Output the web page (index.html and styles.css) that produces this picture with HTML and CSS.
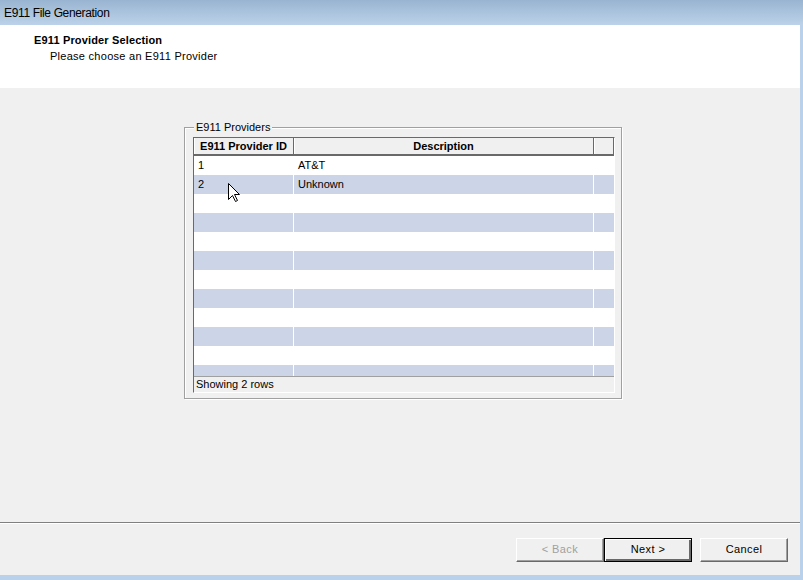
FILE: index.html
```html
<!DOCTYPE html>
<html>
<head>
<meta charset="utf-8">
<title>E911 File Generation</title>
<link rel="stylesheet" href="styles.css">
</head>
<body>
<div class="window">
  <div class="titlebar">E911 File Generation</div>
  <div class="main">
    <div class="hdr">
      <div class="hdr-title">E911 Provider Selection</div>
      <div class="hdr-sub">Please choose an E911 Provider</div>
    </div>
    <div class="content">
      <div class="groupbox">
        <div class="legend">E911 Providers</div>
        <div class="grid">
          <div class="grid-head">
            <div class="hc c1">E911 Provider ID</div>
            <div class="hc c2">Description</div>
            <div class="hc c3"></div>
          </div>
          <div class="rows">
            <div class="row"><div class="cell c1">1</div><div class="cell c2">AT&amp;T</div><div class="cell c3"></div></div>
            <div class="row alt"><div class="cell c1">2</div><div class="cell c2">Unknown</div><div class="cell c3"></div></div>
            <div class="row"><div class="cell c1"></div><div class="cell c2"></div><div class="cell c3"></div></div>
            <div class="row alt"><div class="cell c1"></div><div class="cell c2"></div><div class="cell c3"></div></div>
            <div class="row"><div class="cell c1"></div><div class="cell c2"></div><div class="cell c3"></div></div>
            <div class="row alt"><div class="cell c1"></div><div class="cell c2"></div><div class="cell c3"></div></div>
            <div class="row"><div class="cell c1"></div><div class="cell c2"></div><div class="cell c3"></div></div>
            <div class="row alt"><div class="cell c1"></div><div class="cell c2"></div><div class="cell c3"></div></div>
            <div class="row"><div class="cell c1"></div><div class="cell c2"></div><div class="cell c3"></div></div>
            <div class="row alt"><div class="cell c1"></div><div class="cell c2"></div><div class="cell c3"></div></div>
            <div class="row"><div class="cell c1"></div><div class="cell c2"></div><div class="cell c3"></div></div>
            <div class="row alt"><div class="cell c1"></div><div class="cell c2"></div><div class="cell c3"></div></div>
          </div>
          <div class="status">Showing 2 rows</div>
          <svg class="cursor" width="13" height="20" viewBox="0 0 13 20">
            <path d="M0.5 0.5 L0.5 16.5 L4.5 12.5 L7.5 18.5 L9.5 17.5 L6.5 11.5 L11.5 11.5 Z" fill="#fff" stroke="#000" stroke-width="1" stroke-linejoin="miter"/>
          </svg>
        </div>
      </div>
    </div>
    <div class="sep"></div>
    <div class="footer">
      <div class="btn disabled">&lt; Back</div>
      <div class="btn default">Next &gt;</div>
      <div class="btn cancel">Cancel</div>
    </div>
  </div>
</div>
</body>
</html>
```
FILE: styles.css
```css
html, body {
  margin: 0;
  padding: 0;
}
body {
  width: 803px;
  height: 580px;
  overflow: hidden;
  font-family: "Liberation Sans", Arial, sans-serif;
  font-size: 11px;
  color: #000;
}
.window {
  width: 803px;
  height: 580px;
  background: #b9d1ea;
  display: flex;
  flex-direction: column;
}
.titlebar {
  height: 25px;
  flex: none;
  background: linear-gradient(#99b4d1, #bcd2ea);
  font-size: 12px;
  line-height: 27px;
  padding-left: 4px;
  letter-spacing: -0.35px;
  color: #000;
}
.main {
  width: 800px;
  height: 550px;
  background: #f0f0f0;
  display: flex;
  flex-direction: column;
}
.hdr {
  height: 63px;
  flex: none;
  background: #fff;
  box-sizing: border-box;
  padding-top: 8px;
}
.hdr-title {
  font-weight: bold;
  padding-left: 34px;
  line-height: 15px;
  letter-spacing: 0.15px;
}
.hdr-sub {
  padding-left: 50px;
  line-height: 17px;
  letter-spacing: 0.27px;
}
.content {
  height: 434px;
  flex: none;
  box-sizing: border-box;
  padding-top: 39px;
  padding-left: 184px;
}
.groupbox {
  position: relative;
  width: 438px;
  height: 272px;
  box-sizing: border-box;
  border: 1px solid #a0a0a0;
  box-shadow: 1px 1px 0 #fff, inset 1px 1px 0 #fff;
  padding: 9px 0 0 8px;
}
.legend {
  position: absolute;
  top: -8px;
  left: 9px;
  background: #f0f0f0;
  padding: 0 2px;
  line-height: 14px;
  color: #000;
}
.grid {
  position: relative;
  width: 422px;
  height: 256px;
  box-sizing: border-box;
  border: 1px solid;
  border-color: #696969 #fff #fff #696969;
  display: flex;
  flex-direction: column;
  background: #fff;
}
.grid-head {
  display: flex;
  height: 18px;
  flex: none;
  box-sizing: border-box;
  border-bottom: 2px solid #696969;
  background: #f0f0f0;
}
.hc {
  box-sizing: border-box;
  height: 16px;
  line-height: 16px;
  font-weight: bold;
  text-align: center;
  border-right: 1px solid #696969;
  box-shadow: inset 1px 0 0 #fff;
}
.c1 { width: 100px; flex: none; }
.c2 { width: 300px; flex: none; }
.c3 { width: 20px; flex: none; }
.hc.c3 { border-right: 1px solid #696969; }
.rows {
  height: 220px;
  flex: none;
  overflow: hidden;
}
.row {
  display: flex;
  height: 19px;
  background: #fff;
}
.row.alt {
  background: #ccd5e7;
}
.cell {
  box-sizing: border-box;
  line-height: 19px;
  padding-left: 4px;
  border-right: 1px solid #fff;
}
.cell.c3 { border-right: none; }
.status {
  flex: none;
  height: 16px;
  box-sizing: border-box;
  border-top: 1px solid #a0a0a0;
  background: #f0f0f0;
  line-height: 15px;
  padding-left: 2px;
}
.cursor {
  position: absolute;
  left: 34px;
  top: 45px;
}
.sep {
  height: 1px;
  flex: none;
  background: #808080;
  border-bottom: 1px solid #fff;
}
.footer {
  flex: 1;
  display: flex;
  justify-content: flex-end;
  align-items: flex-start;
  padding: 14px 12px 0 0;
}
.btn {
  width: 88px;
  height: 24px;
  box-sizing: border-box;
  background: #f0f0f0;
  border: 1px solid;
  border-color: #fff #696969 #696969 #fff;
  box-shadow: inset -1px -1px 0 #a0a0a0;
  text-align: center;
  line-height: 21px;
  letter-spacing: 0.4px;
}
.btn.disabled {
  color: #a0a0a0;
}
.btn.default {
  border: 1px solid #000;
  box-shadow: inset 1px 1px 0 #fff, inset -2px -2px 0 #696969;
}
.btn.cancel {
  margin-left: 8px;
}
```
